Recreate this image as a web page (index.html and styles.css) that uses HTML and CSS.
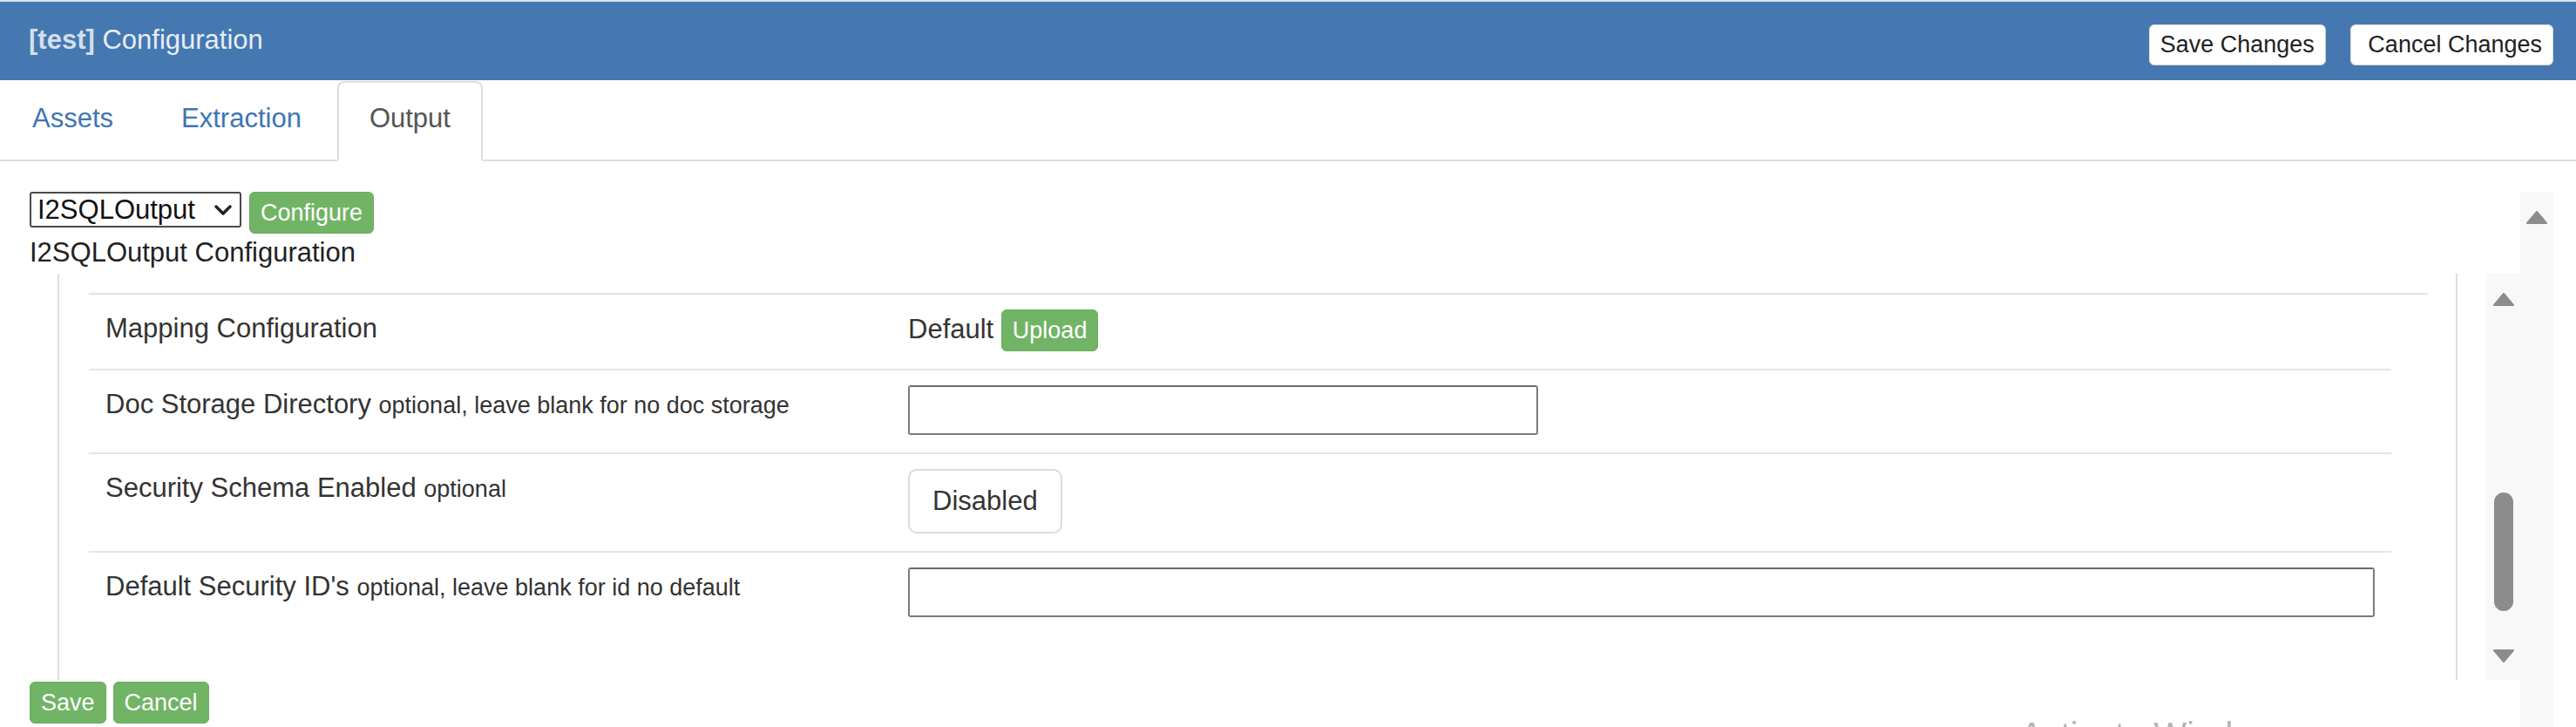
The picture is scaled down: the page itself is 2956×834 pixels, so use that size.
FILE: index.html
```html
<!DOCTYPE html>
<html lang="en">
<head>
  <meta charset="UTF-8">
  <title>[test] Configuration</title>
  <link rel="stylesheet" href="styles.css">
</head>
<body>
  <div class="panel">
    <div class="panel-heading">
      <h3 class="panel-title"><b>[test]</b> Configuration</h3>
      <div class="heading-actions">
        <button class="btn btn-light">Save Changes</button>
        <button class="btn btn-light">&nbsp;Cancel Changes</button>
      </div>
    </div>

    <ul class="nav-tabs">
      <li><a href="#assets">Assets</a></li>
      <li><a href="#extraction">Extraction</a></li>
      <li class="active"><a href="#output">Output</a></li>
    </ul>

    <div class="tab-pane" id="output">
      <div class="pane-body">
        <div class="output-picker">
          <span class="select-wrap">
            <select class="output-select">
              <option>I2SQLOutput</option>
            </select>
            <svg class="select-caret" width="20" height="12" viewBox="0 0 20 12">
              <path d="M2 2 L10 10 L18 2" fill="none" stroke="#222" stroke-width="3.4" stroke-linecap="round" stroke-linejoin="round"/>
            </svg>
          </span>
          <button class="btn btn-success">Configure</button>
        </div>
        <div class="pane-caption">I2SQLOutput Configuration</div>

        <div class="config-frame">
          <div class="config-body">
            <div class="settings">
              <div class="setting-row">
                <div class="setting-label">Mapping Configuration</div>
                <div class="setting-value">Default <button class="btn btn-success">Upload</button></div>
              </div>
              <div class="setting-row">
                <div class="setting-label">Doc Storage Directory <small class="hint">optional, leave blank for no doc storage</small></div>
                <div class="setting-value"><input class="text-input text-input-short" type="text"></div>
              </div>
              <div class="setting-row">
                <div class="setting-label">Security Schema Enabled <small class="hint">optional</small></div>
                <div class="setting-value"><button class="btn-toggle">Disabled</button></div>
              </div>
              <div class="setting-row">
                <div class="setting-label">Default Security ID's <small class="hint">optional, leave blank for id no default</small></div>
                <div class="setting-value"><input class="text-input" type="text"></div>
              </div>
            </div>
          </div>
          <div class="scrollbar scrollbar-inner">
            <svg class="scroll-arrow" width="26" height="19" viewBox="0 0 26 19"><path d="M13 3 L24 16 H2 Z"/></svg>
            <div class="scroll-thumb"></div>
            <svg class="scroll-arrow scroll-arrow-down" width="26" height="19" viewBox="0 0 26 19"><path d="M13 16 L24 3 H2 Z"/></svg>
          </div>
        </div>

        <div class="form-actions">
          <button class="btn btn-success">Save</button>
          <button class="btn btn-success">Cancel</button>
        </div>
      </div>
      <div class="scrollbar scrollbar-outer">
        <svg class="scroll-arrow" width="26" height="19" viewBox="0 0 26 19"><path d="M13 3 L24 16 H2 Z"/></svg>
      </div>
    </div>
  </div>

  <div class="activate-watermark">Activate Windows</div>
</body>
</html>
```

FILE: styles.css
```css
html, body {
    margin: 0;
    height: 834px;
    overflow: hidden;
}
body {
    background: #fff;
    color: #333;
    font-family: "Liberation Sans", Arial, sans-serif;
    font-size: 31px;
    line-height: 44px;
}
button, input, select {
    font-family: inherit;
}

/* heading */
.panel-heading {
    display: flex;
    justify-content: space-between;
    align-items: flex-start;
    height: 68px;
    padding: 22px 26px 0 33px;
    background: #4578b0;
    border-top: 2px solid #d9e2ec;
}
.panel-title {
    margin: 0;
    font-size: 31px;
    font-weight: normal;
    line-height: 44px;
    color: #e6edf6;
}
.panel-title b {
    color: #d3deeb;
}
.heading-actions {
    display: flex;
    gap: 28px;
    margin-top: 4px;
}

/* buttons */
.btn {
    font-size: 27px;
    line-height: 39px;
    padding: 3px 12px;
    border: 1px solid transparent;
    border-radius: 6px;
    cursor: pointer;
    white-space: nowrap;
}
.btn-light {
    background: #fff;
    color: #222;
    border-color: #d6d6d6;
}
.btn-success {
    background: #71b465;
    color: #fff;
    border-color: #69ad5c;
    line-height: 40px;
}
.btn-toggle {
    font-size: 31px;
    line-height: 44px;
    padding: 13px 26px;
    background: #fff;
    color: #333;
    border: 2px solid #dcdcdc;
    border-radius: 10px;
}

/* tabs */
.nav-tabs {
    display: flex;
    list-style: none;
    margin: 0;
    padding: 1px 0 0 0;
    border-bottom: 2px solid #dedede;
}
.nav-tabs li {
    margin-bottom: -2px;
}
.nav-tabs a {
    display: block;
    margin-right: 4px;
    padding: 19px 35px 25px;
    border: 2px solid transparent;
    border-radius: 8px 8px 0 0;
    color: #3f75b4;
    text-decoration: none;
}
.nav-tabs .active a {
    background: #fff;
    color: #555;
    border-color: #dedede #dedede #fff;
}

/* tab content */
.tab-pane {
    display: flex;
    height: 620px;
    margin-top: 35px;
    padding: 0 26px 0 34px;
}
.pane-body {
    flex: 1;
    min-width: 0;
}
.output-picker {
    display: flex;
    align-items: flex-start;
    gap: 9px;
}
.select-wrap {
    display: inline-flex;
    align-items: center;
    width: 239px;
    height: 37px;
    border: 2px solid #4a4a4a;
    border-radius: 3px;
}
.output-select {
    flex: 1;
    min-width: 0;
    appearance: none;
    -webkit-appearance: none;
    border: 0;
    outline: none;
    background: transparent;
    padding: 0 0 0 7px;
    font-size: 31px;
    line-height: 37px;
    height: 37px;
    color: #111;
}
.select-caret {
    margin-right: 9px;
    pointer-events: none;
}
.pane-caption {
    color: #222;
}

/* nested configuration frame */
.config-frame {
    display: flex;
    height: 466px;
    margin-top: 2px;
    margin-left: 32px;
}
.config-body {
    flex: 1;
    min-width: 0;
    padding: 22px 32px 0 34px;
    border-left: 2px solid #dedede;
    border-right: 2px solid #dedede;
    overflow: hidden;
}
.settings {
    border-top: 2px solid #e4e4e4;
    margin-right: -0px;
}
.setting-row {
    display: grid;
    grid-template-columns: 921px 1fr;
    align-items: start;
    margin-right: 42px;
    padding: 17px 19px 20px;
    border-bottom: 2px solid #e4e4e4;
}
.setting-row:last-child {
    border-bottom: 0;
}
.hint {
    font-size: 27px;
}
.text-input {
    display: block;
    box-sizing: border-box;
    width: 100%;
    height: 57px;
    border: 2px solid #7b7b7b;
    border-top-color: #6c6c6c;
    border-radius: 3px;
    padding: 0 8px;
    font-size: 31px;
}
.text-input-short {
    width: 723px;
}
.form-actions {
    display: flex;
    gap: 8px;
    margin-top: 2px;
}

/* scrollbars */
.scrollbar {
    display: flex;
    flex-direction: column;
    align-items: center;
    background: #f8f8f8;
    padding-top: 20px;
    box-sizing: border-box;
}
.scrollbar-inner {
    width: 39px;
    margin-left: 33px;
}
.scrollbar-outer {
    width: 38px;
}
.scroll-arrow path {
    fill: #8c8c8c;
    stroke: #8c8c8c;
    stroke-width: 2;
    stroke-linejoin: round;
}
.scroll-thumb {
    width: 22px;
    height: 136px;
    margin-top: 212px;
    border-radius: 11px;
    background: #8c8c8c;
}
.scroll-arrow-down {
    margin-top: 42px;
}

/* OS watermark sitting over the page */
.activate-watermark {
    position: fixed;
    left: 2318px;
    top: 823px;
    font-size: 40px;
    line-height: 40px;
    color: #b4b4b4;
    pointer-events: none;
    white-space: nowrap;
}
```
